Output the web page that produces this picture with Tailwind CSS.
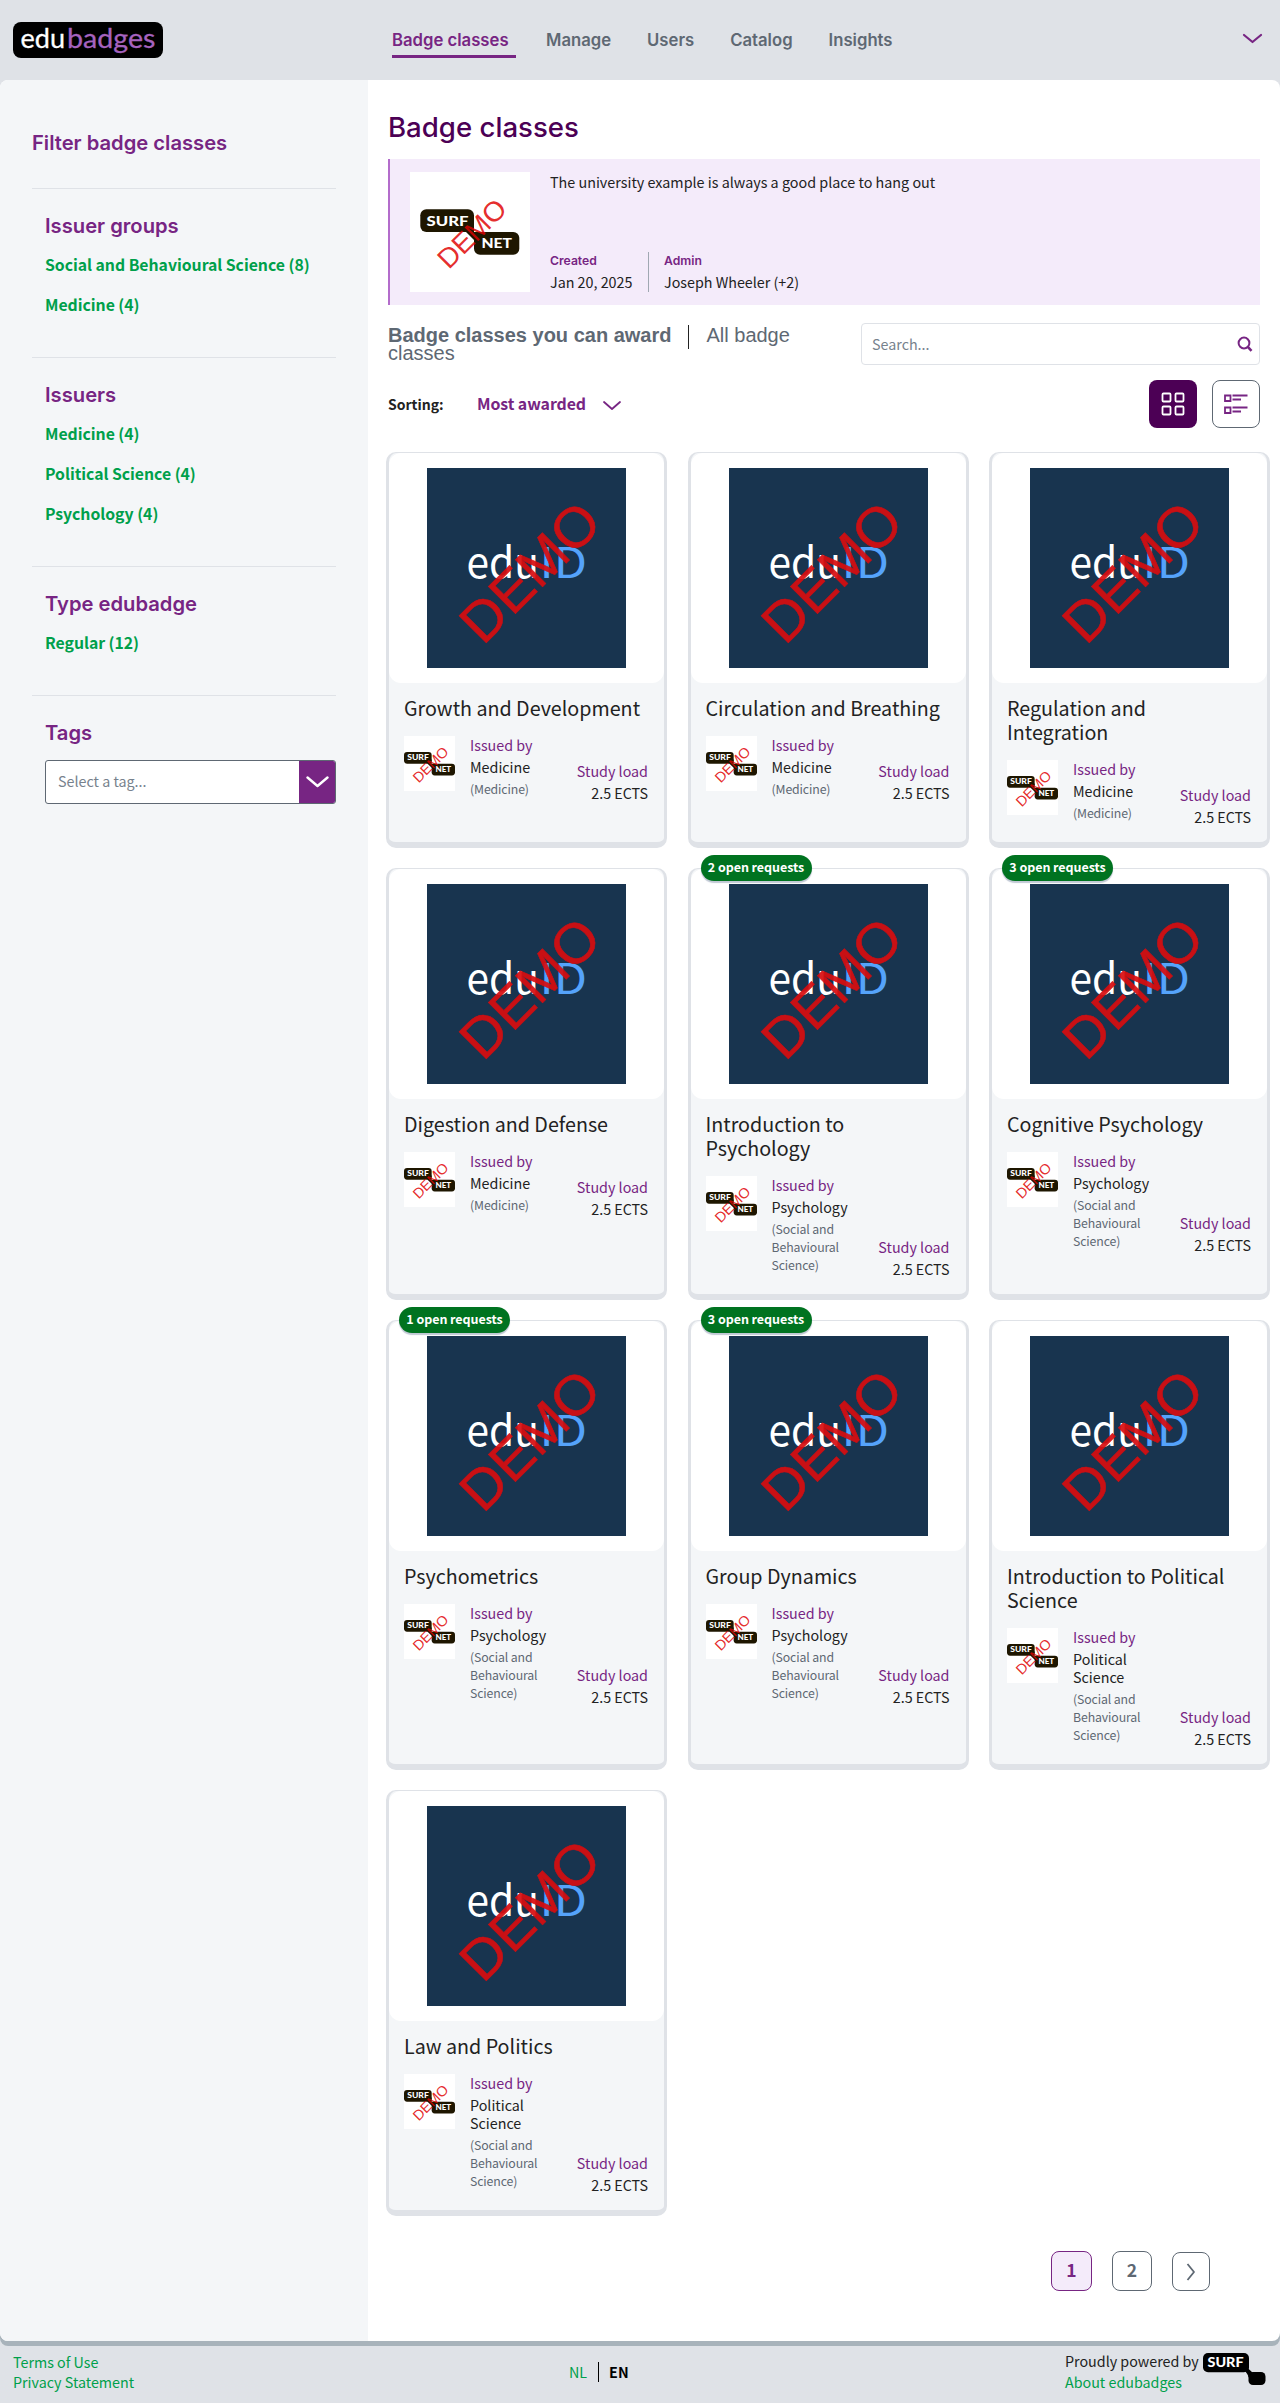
<!DOCTYPE html>
<html lang="en">
<head>
<meta charset="utf-8">
<title>edubadges</title>
<script src="https://cdn.jsdelivr.net/npm/@tailwindcss/browser@4"></script>
</head>
<body class="bg-[#dfe2e7] font-['Noto_Sans_CJK_SC',sans-serif] text-[14.3px] text-[#222]">

<!-- shared artwork -->
<svg class="hidden">
  <symbol id="surfnet" viewBox="0 0 120 120" overflow="visible">
    <path d="M56 52h8v8h8v8h-8l-8-8z" fill="#1e1600"/>
    <rect x="10.3" y="37.3" width="53.7" height="22.7" rx="6" fill="#1e1600"/>
    <rect x="64" y="60" width="45.3" height="22.7" rx="6" fill="#1e1600"/>
    <text x="16.5" y="53.6" textLength="42" lengthAdjust="spacingAndGlyphs" font-family="Lato, sans-serif" font-weight="900" font-size="13.8" fill="#fff">SURF</text>
    <text x="71.5" y="76.3" textLength="30.5" lengthAdjust="spacingAndGlyphs" font-family="Lato, sans-serif" font-weight="900" font-size="13.8" fill="#fff">NET</text>
    <text transform="translate(38.7 98.3) rotate(-45)" textLength="84.5" lengthAdjust="spacingAndGlyphs" font-family="Liberation Sans, sans-serif" font-size="27.8" fill="#e00000" fill-opacity=".84">DEMO</text>
  </symbol>
  <symbol id="eduid" viewBox="0 0 199 200">
    <rect width="199" height="200" fill="#18344f"/>
    <text x="39.5" y="110.3" textLength="72.5" lengthAdjust="spacingAndGlyphs" font-family="Noto Sans CJK SC, sans-serif" font-size="42" fill="#fff">edu</text>
    <text x="112.5" y="110.3" textLength="47.500" lengthAdjust="spacingAndGlyphs" font-family="Noto Sans CJK SC, sans-serif" font-size="42" fill="#55a3fb">ID</text>
    <text transform="translate(56 178.3) rotate(-45)" textLength="171.5" lengthAdjust="spacingAndGlyphs" font-family="Liberation Sans, sans-serif" font-size="56" fill="#d90d10" stroke="#d90d10" stroke-width=".6" opacity=".92">DEMO</text>
  </symbol>
</svg>

<header class="flex h-20">
  <a class="mt-[22px] ml-[13px] h-9 w-[379px]">
    <svg width="150" height="36"><rect width="150" height="36" rx="8"/>
      <text x="7.5" y="25.6" textLength="44.500" lengthAdjust="spacingAndGlyphs" font-family="Lato, sans-serif" font-size="27" fill="#fff" stroke="#fff" stroke-width=".3">edu</text>
      <text x="54" y="25.6" textLength="88.500" lengthAdjust="spacingAndGlyphs" font-family="Lato, sans-serif" font-size="27" fill="#a663bf" stroke="#a663bf" stroke-width=".3">badges</text></svg>
  </a>
  <nav class="flex gap-[30px] pt-[25px] font-['Inter',sans-serif] text-[16.7px] leading-[31px] font-semibold text-[#5e6873]">
    <a class="h-[33px] w-[124px] border-b-[3px] border-[#772583] text-[#772583]">Badge classes</a>
    <a class="pr-1.5">Manage</a><a class="pr-1.5">Users</a><a class="pr-1.5">Catalog</a><a>Insights</a>
  </nav>
  <svg class="mt-[33px] mr-[17px] ml-auto" width="21" height="11" fill="none" stroke="#772583" stroke-width="2.2" stroke-linecap="round" stroke-linejoin="round"><path d="M2 2l8.5 7L19 2"/></svg>
</header>

<div class="flex h-[2261px] rounded-lg bg-white shadow-[0_5px_0_#a8b3bb]">
  <aside class="w-[368px] shrink-0 rounded-l-lg bg-[#f4f6f8] pr-8 pl-8">
    <h2 class="h-[108px] pt-[43px] font-['Inter',sans-serif] text-[20.2px] leading-10 font-semibold text-[#772583]">Filter badge classes</h2>
    <section class="border-t border-[#dfe2e7] pt-[18px] pb-8 pl-[13px]">
      <h3 class="font-['Inter',sans-serif] text-[20.2px] leading-[38px] font-semibold text-[#772583]">Issuer groups</h3>
      <ul class="text-[15.8px] leading-10 font-bold tracking-[-0.002em] text-[#00a04b]"><li>Social and Behavioural Science (8)</li><li>Medicine (4)</li></ul>
    </section>
    <section class="border-t border-[#dfe2e7] pt-[18px] pb-8 pl-[13px]">
      <h3 class="font-['Inter',sans-serif] text-[20.2px] leading-[38px] font-semibold text-[#772583]">Issuers</h3>
      <ul class="text-[15.8px] leading-10 font-bold tracking-[-0.002em] text-[#00a04b]"><li>Medicine (4)</li><li>Political Science (4)</li><li>Psychology (4)</li></ul>
    </section>
    <section class="border-t border-[#dfe2e7] pt-[18px] pb-8 pl-[13px]">
      <h3 class="font-['Inter',sans-serif] text-[20.2px] leading-[38px] font-semibold text-[#772583]">Type edubadge</h3>
      <ul class="text-[15.8px] leading-10 font-bold tracking-[-0.002em] text-[#00a04b]"><li>Regular (12)</li></ul>
    </section>
    <section class="border-t border-[#dfe2e7] pt-[18px] pl-[13px]">
      <h3 class="font-['Inter',sans-serif] text-[20.2px] leading-[38px] font-semibold text-[#772583]">Tags</h3>
      <div class="mt-2 flex h-11 overflow-hidden rounded-[3px] border border-[#5e6873] bg-white">
        <span class="grow pl-3 leading-10 text-[#77828d]">Select a tag...</span>
        <span class="flex w-9 items-center justify-center bg-[#772583]"><svg width="23" height="12" fill="none" stroke="#fff" stroke-width="2.4" stroke-linecap="round" stroke-linejoin="round"><path d="M1.5 1.5l10 8.5 10-8.5"/></svg></span>
      </div>
    </section>
  </aside>

  <main class="flex w-[912px] flex-col pt-[30px] pr-5 pl-5">
    <h1 class="font-['Inter',sans-serif] text-[27.6px] leading-[34px] font-medium text-[#4c0055]">Badge classes</h1>
    <div class="mt-[15px] flex h-[146px] border-l-2 border-[#b36ccb] bg-[#f4ebfa] py-[13px] pl-5">
      <svg class="bg-white" width="120" height="120"><use href="#surfnet"/></svg>
      <div class="ml-5 flex flex-col justify-between">
        <p class="text-[14.35px] leading-5">The university example is always a good place to hang out</p>
        <div class="flex h-10">
          <div class="w-[99px] border-r border-[#a0a8b2]"><p class="font-['Inter',sans-serif] text-[12.2px] leading-[18px] font-semibold text-[#772583]">Created</p><p class="mt-0.5 leading-5">Jan 20, 2025</p></div>
          <div class="pl-[15px]"><p class="font-['Inter',sans-serif] text-[12.2px] leading-[18px] font-semibold text-[#772583]">Admin</p><p class="mt-0.5 leading-5">Joseph Wheeler (+2)</p></div>
        </div>
      </div>
    </div>

    <div class="mt-[18px] flex h-[42px] justify-between">
      <div class="w-[440px] pt-[3px] font-['Liberation_Sans',sans-serif] text-[20px] leading-[18px] text-[#5e6873]"><b>Badge classes you can award</b><i class="mx-[17px] -my-2 inline-block h-6 w-px bg-[#222] align-middle"></i>All badge classes</div>
      <div class="flex w-[399px] items-center justify-between rounded border border-[#dfe2e7] bg-white pr-1.5 pl-2.5 text-[#77828d]">
        <span class="-mt-px">Search...</span>
        <svg width="16" height="16" fill="none" stroke="#772583" stroke-width="2"><circle cx="7" cy="7" r="5.4"/><path d="M10.6 10.6l3.9 4.2" stroke-width="2.6"/></svg>
      </div>
    </div>

    <div class="mt-[15px] flex h-12 items-center">
      <span class="w-[89px] text-[14px] font-bold">Sorting:</span>
      <span class="text-[15.9px] font-bold tracking-[-0.005em] text-[#772583]">Most awarded</span>
      <svg class="mt-0.5 ml-4" width="20" height="11" fill="none" stroke="#772583" stroke-width="1.8" stroke-linecap="round" stroke-linejoin="round"><path d="M2 2l8 7 8-7"/></svg>
      <span class="ml-auto flex size-12 items-center justify-center rounded-lg bg-[#4c0055]"><svg width="24" height="24" fill="none" stroke="#fff" stroke-width="1.8"><rect x="1.5" y="1.5" width="8" height="8" rx="1"/><rect x="14.5" y="1.5" width="8" height="8" rx="1"/><rect x="1.5" y="14.5" width="8" height="8" rx="1"/><rect x="14.5" y="14.5" width="8" height="8" rx="1"/></svg></span>
      <span class="ml-[15px] flex size-12 items-center justify-center rounded-lg border border-[#5e6873]"><svg width="24" height="20" fill="none" stroke="#772583" stroke-width="1.8"><path d="M1 1.500h5.500v5.500h-5.500zM1 13.500h5.500v5.500h-5.500zM8.500 1.500h15M8.500 5.500h8.500M8.500 13.500h15M8.500 17.500h8.500"/></svg></span>
    </div>

    <div id="cards" class="mt-6 -mr-[10px] -ml-0.5 grid shrink-0 grid-cols-[281px_281px_281px] gap-x-[20.5px] gap-y-5"></div>

    <div class="mt-[35px] flex items-end pl-[663px] text-[17.5px] font-bold text-[#5e6873]">
      <span class="flex h-10 w-[41px] items-center justify-center rounded-lg border border-[#772583] bg-[#f4ebfa] pb-0.5 text-[#772583]">1</span>
      <span class="ml-5 flex size-10 items-center justify-center rounded-lg border border-[#5e6873] pb-0.5">2</span>
      <span class="ml-5 flex h-[39px] w-[38px] items-center justify-center rounded-lg border border-[#5e6873]"><svg width="10" height="18" fill="none" stroke="#5e6873" stroke-width="1.8" stroke-linejoin="round"><path d="M1.5 1l6.5 8-6.5 8"/></svg></span>
    </div>
  </main>
</div>

<footer class="flex h-[62px] justify-between pt-[11px] pr-3.5 pl-[13px] leading-5">
  <div class="w-[556px] text-[#00a04b]"><p>Terms of Use</p><p>Privacy Statement</p></div>
  <div class="mt-[10px] flex h-5 grow self-start"><span class="mr-[11px] text-[#00a04b]">NL</span><span class="h-5 w-px bg-black"></span><span class="ml-[10px] font-bold text-black">EN</span></div>
  <div class="flex w-[201px]">
    <div class="-mt-px w-[139px] whitespace-nowrap"><p>Proudly powered by</p><p class="mt-px text-[#00a04b]">About edubadges</p></div>
    <svg class="mt-px" width="63" height="33"><rect width="46" height="19.3" rx="5"/><rect x="45.5" y="19" width="17" height="13" rx="4.5"/><path d="M40 16l4-4 1.7 4 4.3 4-4.5 4.500q0-3-5.500-8.500z"/><text x="4.5" y="13.8" textLength="36" lengthAdjust="spacingAndGlyphs" font-family="Lato, sans-serif" font-size="12.6" font-weight="900" fill="#fff">SURF</text></svg>
  </div>
</footer>

<script>
const soc = '(Social and Behavioural Science)';
const badges = [
  ['Growth and Development', 'Medicine', '(Medicine)'],
  ['Circulation and Breathing', 'Medicine', '(Medicine)'],
  ['Regulation and Integration', 'Medicine', '(Medicine)'],
  ['Digestion and Defense', 'Medicine', '(Medicine)'],
  ['Introduction to Psychology', 'Psychology', soc, 2],
  ['Cognitive Psychology', 'Psychology', soc, 3],
  ['Psychometrics', 'Psychology', soc, 1],
  ['Group Dynamics', 'Psychology', soc, 3],
  ['Introduction to Political Science', 'Political Science', soc],
  ['Law and Politics', 'Political Science', soc],
];
document.getElementById('cards').innerHTML = badges.map(([title, issuer, group, open]) => `
  <article class="relative rounded-[10px] border-x-[3px] border-t border-b-[6px] border-[#dfe2e7] bg-[#f4f6f8] pb-4">
    ${open ? `<span class="absolute -top-3.5 left-2.5 flex h-[26px] w-[111px] items-center justify-center rounded-full bg-[#007320] pb-px text-[12.5px] font-bold tracking-[-0.005em] text-white shadow-[0_2px_1px_#c0c8d4]">${open} open requests</span>` : ''}
    <div class="flex h-[230px] justify-center rounded-xl bg-white pt-[15px]"><svg width="199" height="200"><use href="#eduid"/></svg></div>
    <h4 class="pt-[13px] pr-[18px] pl-[15px] text-[19.7px] leading-6">${title}</h4>
    <div class="mt-4 flex pr-4 pl-[15px]">
      <svg class="shrink-0 bg-white" width="51" height="55" viewBox="10.3 6.2 99 106.8"><use href="#surfnet" width="120" height="120"/></svg>
      <div class="ml-[15px] w-20 pb-1 leading-[18px]"><p class="text-[#772583]">Issued by</p><p class="mt-1">${issuer}</p><p class="mt-1 text-[12.3px] tracking-[-0.01em] text-[#5e6873]">${group}</p></div>
      <div class="ml-auto self-end text-right leading-[18px] whitespace-nowrap"><p class="text-[#772583]">Study load</p><p class="mt-1">2.5 ECTS</p></div>
    </div>
  </article>`).join('');
</script>
</body>
</html>
